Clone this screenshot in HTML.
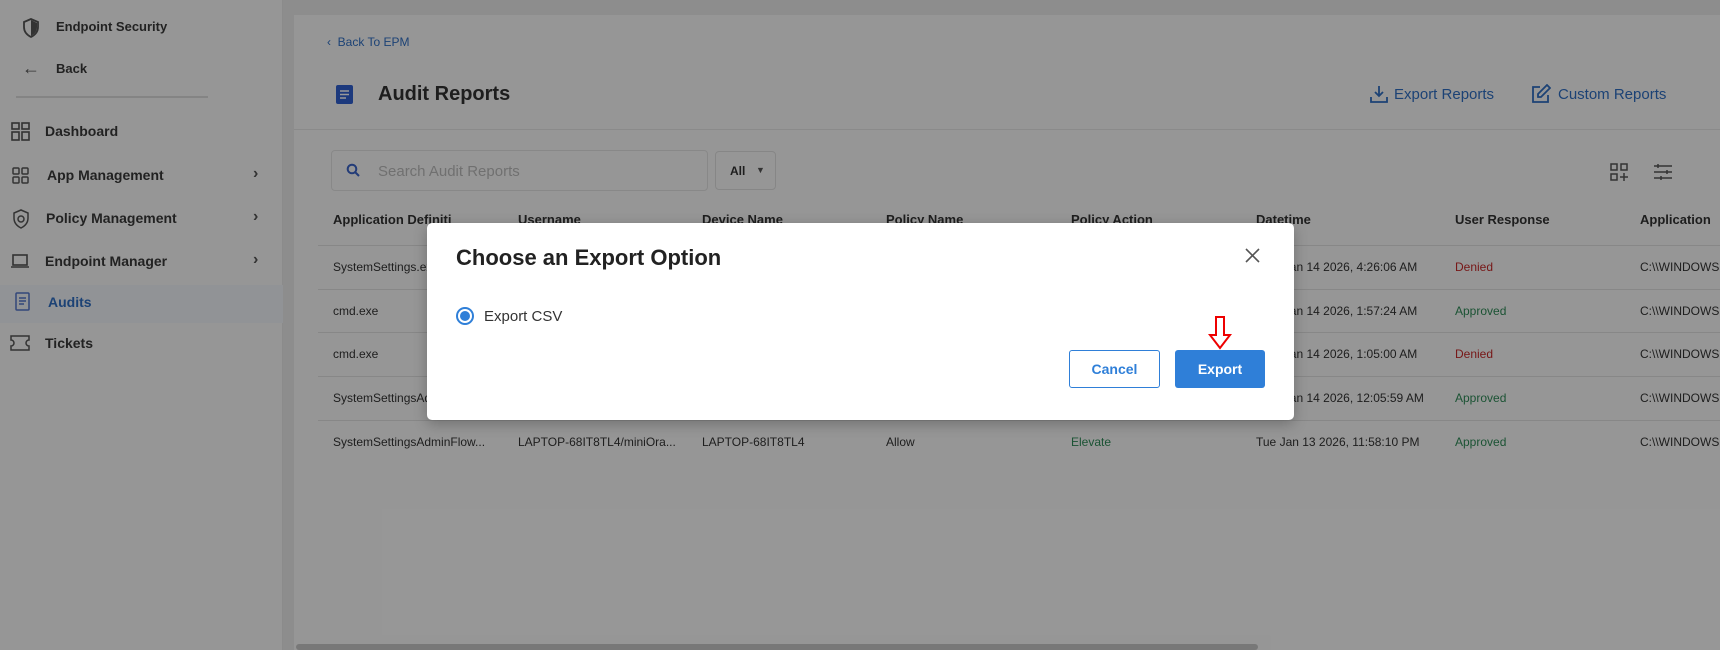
<!DOCTYPE html>
<html><head><meta charset="utf-8"><style>
*{box-sizing:border-box;margin:0;padding:0}
body{width:1720px;height:650px;overflow:hidden;font-family:"Liberation Sans",sans-serif;background:#ececec;position:relative;color:#333}
.abs{position:absolute;white-space:nowrap}
.side{position:absolute;left:0;top:0;width:283px;height:650px;background:#fafafa;border-right:1px solid #e8e8e8}
.si{position:absolute;left:0;width:283px;font-size:14px;font-weight:bold;color:#3a3a3a}
.card{position:absolute;left:294px;top:15px;width:1426px;height:635px;background:#fbfbfb}
.th{font-size:13px;font-weight:bold;color:#333}
.td{font-size:12px;color:#333}
.line{position:absolute;left:318px;width:1402px;height:1px;background:#e2e2e2}
.ov{position:absolute;left:0;top:0;width:1720px;height:650px;background:rgba(0,0,0,0.4)}
.blue{color:#2f6fc4}
</style></head><body>
<div class="side">
 <svg class="abs" style="left:22px;top:18px" width="18" height="20" viewBox="0 0 18 20"><path d="M9 1L2 4v5c0 5 3 8 7 10 4-2 7-5 7-10V4z" fill="none" stroke="#555" stroke-width="1.8"/><path d="M9 2v16c3-2 6-4 6-9V5z" fill="#555"/></svg>
 <div class="abs" style="left:56px;top:19px;font-size:13px;font-weight:bold;color:#3a3a3a">Endpoint Security</div>
 <div class="abs" style="left:22px;top:58px;font-size:18px;color:#555">←</div>
 <div class="abs" style="left:56px;top:61px;font-size:13px;font-weight:bold;color:#3a3a3a">Back</div>
 <div class="abs" style="left:16px;top:96px;width:192px;height:2px;background:#ddd"></div>
 <div class="si" style="top:123px"><svg class="abs" style="left:11px;top:-1px" width="19" height="19" viewBox="0 0 19 19" fill="none" stroke="#555" stroke-width="1.6"><rect x="1" y="1" width="7" height="6"/><rect x="11" y="1" width="7" height="6"/><rect x="1" y="10" width="7" height="8"/><rect x="11" y="10" width="7" height="8"/></svg><span class="abs" style="left:45px">Dashboard</span></div>
 <div class="si" style="top:167px"><svg class="abs" style="left:12px;top:0" width="17" height="17" viewBox="0 0 17 17" fill="none" stroke="#555" stroke-width="1.5"><rect x="1" y="1" width="6" height="6" rx="1"/><rect x="10" y="1" width="6" height="6" rx="1"/><rect x="1" y="10" width="6" height="6" rx="1"/><rect x="10" y="10" width="6" height="6" rx="1"/></svg><span class="abs" style="left:47px">App Management</span><span class="abs" style="left:253px;top:-2px;font-size:16px;color:#555">›</span></div>
 <div class="si" style="top:210px"><svg class="abs" style="left:12px;top:-1px" width="18" height="20" viewBox="0 0 18 20" fill="none" stroke="#555" stroke-width="1.5"><path d="M9 1L2 4v5c0 5 3 8 7 10 4-2 7-5 7-10V4z"/><circle cx="9" cy="10" r="3"/></svg><span class="abs" style="left:46px">Policy Management</span><span class="abs" style="left:253px;top:-2px;font-size:16px;color:#555">›</span></div>
 <div class="si" style="top:253px"><svg class="abs" style="left:10px;top:1px" width="20" height="15" viewBox="0 0 20 15" fill="none" stroke="#555" stroke-width="1.6"><rect x="3" y="1" width="14" height="10"/><path d="M1 13h18"/></svg><span class="abs" style="left:45px">Endpoint Manager</span><span class="abs" style="left:253px;top:-2px;font-size:16px;color:#555">›</span></div>
 <div class="abs" style="left:0;top:285px;width:283px;height:38px;background:#f2f5fb"></div>
 <div class="si" style="top:294px;color:#2f6fc4"><svg class="abs" style="left:15px;top:-2px" width="15" height="19" viewBox="0 0 15 19" fill="none" stroke="#5577cc" stroke-width="1.5"><rect x="1" y="1" width="13" height="17" rx="1"/><path d="M4 6h7M4 9h7M4 12h5"/></svg><span class="abs" style="left:48px">Audits</span></div>
 <div class="si" style="top:335px"><svg class="abs" style="left:10px;top:0" width="20" height="16" viewBox="0 0 20 16" fill="none" stroke="#555" stroke-width="1.5"><path d="M1 1h18v4a3 3 0 000 6v4H1v-4a3 3 0 000-6z"/></svg><span class="abs" style="left:45px">Tickets</span></div>
</div>
<div class="card">
 <div class="abs blue" style="left:33px;top:20px;font-size:12px">‹ &nbsp;Back To EPM</div>
 <svg class="abs" style="left:42px;top:70px" width="17" height="19" viewBox="0 0 17 19"><rect width="17" height="19" rx="2" fill="#2f5fd0"/><path d="M4 6h9M4 9.5h9M4 13h6" stroke="#fff" stroke-width="1.6"/></svg>
 <div class="abs" style="left:84px;top:68px;font-size:20px;font-weight:bold;color:#333">Audit Reports</div>
 <svg class="abs" style="left:1076px;top:70px" width="18" height="18" viewBox="0 0 18 18" fill="none" stroke="#2f6fc4" stroke-width="1.8"><path d="M9 1v10M5 7l4 4 4-4M1 12v5h16v-5"/></svg>
 <div class="abs blue" style="left:1100px;top:71px;font-size:15px">Export Reports</div>
 <svg class="abs" style="left:1237px;top:69px" width="20" height="20" viewBox="0 0 20 20" fill="none" stroke="#2f6fc4" stroke-width="1.8"><path d="M9 3H2v15h15v-7"/><path d="M16 1l3 3-9 9H7v-3z"/></svg>
 <div class="abs blue" style="left:1264px;top:71px;font-size:15px">Custom Reports</div>
 <div class="abs" style="left:0;top:114px;width:1426px;height:1px;background:#e6e6e6"></div>
 <div class="abs" style="left:37px;top:135px;width:377px;height:41px;border:1px solid #e3e3e3;border-radius:4px;background:#fbfbfb"></div>
 <svg class="abs" style="left:52px;top:148px" width="14" height="14" viewBox="0 0 14 14" fill="none" stroke="#3b64c8" stroke-width="2"><circle cx="6" cy="6" r="4.3"/><path d="M9 9l4 4"/></svg>
 <div class="abs" style="left:84px;top:148px;font-size:15px;color:#bbb">Search Audit Reports</div>
 <div class="abs" style="left:421px;top:136px;width:61px;height:39px;border:1px solid #e0e0e0;border-radius:4px"></div>
 <div class="abs" style="left:436px;top:149px;font-size:12px;font-weight:bold">All</div>
 <div class="abs" style="left:462px;top:150px;font-size:9px;color:#555">▼</div>
 <svg class="abs" style="left:1316px;top:148px" width="19" height="19" viewBox="0 0 19 19" fill="none" stroke="#555" stroke-width="1.5"><rect x="1" y="1" width="6" height="6"/><rect x="11" y="1" width="6" height="6"/><rect x="1" y="11" width="6" height="6"/><path d="M14 10v8M10 14h8"/></svg>
 <svg class="abs" style="left:1359px;top:148px" width="20" height="18" viewBox="0 0 20 18" fill="none" stroke="#555" stroke-width="1.5"><path d="M1 3h18M1 9h18M1 15h18"/><path d="M5 1v4M14 7v4M8 13v4"/></svg>
</div>
<div class="abs th" style="left:333px;top:212px">Application Definiti</div>
<div class="abs th" style="left:518px;top:212px">Username</div>
<div class="abs th" style="left:702px;top:212px">Device Name</div>
<div class="abs th" style="left:886px;top:212px">Policy Name</div>
<div class="abs th" style="left:1071px;top:212px">Policy Action</div>
<div class="abs th" style="left:1256px;top:212px">Datetime</div>
<div class="abs th" style="left:1455px;top:212px">User Response</div>
<div class="abs th" style="left:1640px;top:212px">Application</div>
<div class="line" style="top:245px"></div><div class="line" style="top:289px"></div><div class="line" style="top:332px"></div><div class="line" style="top:376px"></div><div class="line" style="top:420px"></div>
<div class="abs td" style="left:333px;top:260px">SystemSettings.exe</div>
<div class="abs td" style="left:333px;top:304px">cmd.exe</div>
<div class="abs td" style="left:333px;top:347px">cmd.exe</div>
<div class="abs td" style="left:333px;top:391px">SystemSettingsAdminFlows.exe</div>
<div class="abs td" style="left:333px;top:435px">SystemSettingsAdminFlow...</div>
<div class="abs td" style="left:518px;top:435px">LAPTOP-68IT8TL4/miniOra...</div>
<div class="abs td" style="left:702px;top:435px">LAPTOP-68IT8TL4</div>
<div class="abs td" style="left:886px;top:435px">Allow</div>
<div class="abs td" style="left:1071px;top:435px;color:#2e8b57">Elevate</div>
<div class="abs td" style="left:1256px;top:260px">Wed Jan 14 2026, 4:26:06 AM</div>
<div class="abs td" style="left:1256px;top:304px">Wed Jan 14 2026, 1:57:24 AM</div>
<div class="abs td" style="left:1256px;top:347px">Wed Jan 14 2026, 1:05:00 AM</div>
<div class="abs td" style="left:1256px;top:391px">Wed Jan 14 2026, 12:05:59 AM</div>
<div class="abs td" style="left:1256px;top:435px">Tue Jan 13 2026, 11:58:10 PM</div>
<div class="abs td" style="left:1455px;top:260px;color:#c62828">Denied</div>
<div class="abs td" style="left:1455px;top:304px;color:#2e8b57">Approved</div>
<div class="abs td" style="left:1455px;top:347px;color:#c62828">Denied</div>
<div class="abs td" style="left:1455px;top:391px;color:#2e8b57">Approved</div>
<div class="abs td" style="left:1455px;top:435px;color:#2e8b57">Approved</div>
<div class="abs td" style="left:1640px;top:260px">C:\\WINDOWS</div>
<div class="abs td" style="left:1640px;top:304px">C:\\WINDOWS</div>
<div class="abs td" style="left:1640px;top:347px">C:\\WINDOWS</div>
<div class="abs td" style="left:1640px;top:391px">C:\\WINDOWS</div>
<div class="abs td" style="left:1640px;top:435px">C:\\WINDOWS</div>
<div class="abs" style="left:296px;top:644px;width:962px;height:6px;background:#c8c8c8;border-radius:3px"></div>
<div class="ov"></div>
<div class="abs" style="left:427px;top:223px;width:867px;height:197px;background:#fff;border-radius:5px;box-shadow:0 4px 14px rgba(0,0,0,0.25)"></div>
<div class="abs" style="left:456px;top:245px;font-size:22px;font-weight:bold;color:#222">Choose an Export Option</div>
<svg class="abs" style="left:1245px;top:248px" width="15" height="15" viewBox="0 0 15 15" stroke="#555" stroke-width="1.6"><path d="M1 1l13 13M14 1L1 14"/></svg>
<div class="abs" style="left:456px;top:307px;width:18px;height:18px;border:2px solid #2f7fd8;border-radius:50%"></div>
<div class="abs" style="left:460px;top:311px;width:10px;height:10px;background:#2f7fd8;border-radius:50%"></div>
<div class="abs" style="left:484px;top:308px;font-size:15px;color:#333">Export CSV</div>
<div class="abs" style="left:1069px;top:350px;width:91px;height:38px;border:1px solid #2f7fd8;border-radius:3px;text-align:center;line-height:36px;font-size:14px;font-weight:bold;color:#2f7fd8">Cancel</div>
<div class="abs" style="left:1175px;top:350px;width:90px;height:38px;background:#2f7fd8;border-radius:3px;text-align:center;line-height:38px;font-size:14px;font-weight:bold;color:#fff">Export</div>
<svg class="abs" style="left:1208px;top:316px" width="24" height="34" viewBox="0 0 24 34" fill="#fff" stroke="#e00" stroke-width="2"><path d="M8 1h8v18h6L12 32 2 19h6z"/></svg>
</body></html>
